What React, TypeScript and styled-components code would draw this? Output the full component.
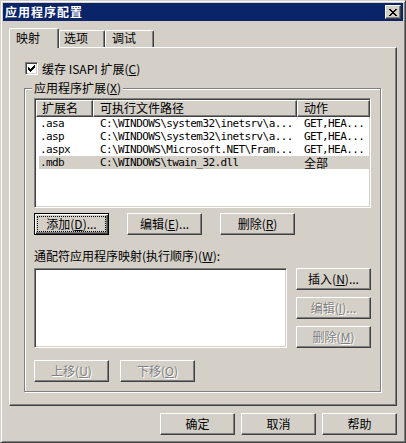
import React from "react";
import styled, { createGlobalStyle } from "styled-components";

const GlobalStyle = createGlobalStyle`
  html, body { margin: 0; padding: 0; background: #d4d0c8; }
  body {
    font-family: "Noto Sans CJK SC", "Noto Sans", sans-serif;
    font-size: 12px;
    color: #000;
  }
  * { box-sizing: border-box; }
`;

const Window = styled.div`
  width: 406px;
  height: 443px;
  background: #d4d0c8;
  border: 1px solid;
  border-color: #d4d0c8 #404040 #404040 #d4d0c8;
  box-shadow: inset 1px 1px #fff, inset -1px -1px #808080;
  padding: 2px;
  display: flex;
  flex-direction: column;
`;

const TitleBar = styled.div`
  height: 18px;
  background: #0a246a;
  display: flex;
  align-items: center;
  justify-content: space-between;
  padding: 0 2px 0 2px;
`;

const TitleText = styled.span`
  color: #fff;
  font-weight: bold;
  font-size: 12px;
  letter-spacing: 1px;
  line-height: 18px;
`;

const CloseButton = styled.div`
  width: 16px;
  height: 14px;
  background: #d4d0c8;
  border: 1px solid;
  border-color: #fff #404040 #404040 #fff;
  box-shadow: inset -1px -1px #808080;
  display: flex;
  align-items: center;
  justify-content: center;
  padding-right: 1px;
`;

const Body = styled.div`
  flex: 1;
  padding: 7px 6px 0 6px;
  display: flex;
  flex-direction: column;
`;

const TabStrip = styled.div`
  display: flex;
  align-items: flex-end;
  height: 19px;
  position: relative;
  z-index: 1;
`;

const Tab = styled.div<{ $active?: boolean; $w: number; $pl: number }>`
  width: ${(p) => p.$w}px;
  height: ${(p) => (p.$active ? 20 : 17)}px;
  margin-bottom: ${(p) => (p.$active ? -1 : 0)}px;
  padding-left: ${(p) => p.$pl}px;
  padding-top: ${(p) => (p.$active ? 2 : 0)}px;
  background: #d4d0c8;
  border: 1px solid;
  border-bottom: none;
  border-color: #fff #404040 #404040 #fff;
  border-radius: 2px 2px 0 0;
  box-shadow: inset -1px 0 #808080;
  line-height: 14px;
  white-space: nowrap;
`;

const Panel = styled.div`
  height: 359px;
  border: 1px solid;
  border-color: #fff #404040 #404040 #fff;
  box-shadow: inset -1px -1px #808080;
  padding: 14px 14px 0 14px;
  display: flex;
  flex-direction: column;
`;

const CheckRow = styled.div`
  display: flex;
  align-items: center;
  gap: 4px;
  height: 13px;
  margin-left: 1px;
  line-height: 13px;
  white-space: nowrap;
`;

const CheckBox = styled.div`
  width: 13px;
  height: 13px;
  background: #fff;
  border: 1px solid;
  border-color: #808080 #fff #fff #808080;
  box-shadow: inset 1px 1px #404040, inset -1px -1px #d4d0c8;
  display: flex;
  align-items: center;
  justify-content: center;
`;

const GroupBox = styled.div`
  position: relative;
  margin-top: 13px;
  margin-right: 1px;
  border: 1px solid #808080;
  box-shadow: 1px 1px 0 #fff, inset 1px 1px 0 #fff;
  padding: 9px 9px 9px 9px;
  display: flex;
  flex-direction: column;
`;

const GroupLabel = styled.span`
  position: absolute;
  top: -8px;
  left: 7px;
  padding: 0 2px;
  background: #d4d0c8;
  line-height: 14px;
  white-space: nowrap;
`;

const Sunken = styled.div<{ $w?: number; $h: number }>`
  ${(p) => (p.$w ? `width: ${p.$w}px;` : "")}
  height: ${(p) => p.$h}px;
  background: #fff;
  border: 1px solid;
  border-color: #808080 #fff #fff #808080;
  box-shadow: inset 1px 1px #404040, inset -1px -1px #d4d0c8;
  padding: 1px;
  overflow: hidden;
`;

const Columns = "57px 204px 73px";

const HeaderRow = styled.div`
  display: grid;
  grid-template-columns: ${Columns};
  height: 17px;
`;

const HeaderCell = styled.div<{ $pl: number }>`
  background: #d4d0c8;
  border: 1px solid;
  border-color: #fff #404040 #404040 #fff;
  box-shadow: inset -1px -1px #808080;
  padding-left: ${(p) => p.$pl}px;
  line-height: 14px;
  white-space: nowrap;
  overflow: hidden;
`;

const Row = styled.div<{ $selected?: boolean }>`
  display: grid;
  grid-template-columns: ${Columns};
  height: 13px;
  background: ${(p) =>
    p.$selected
      ? "linear-gradient(to right, #fff 0, #fff 3px, #d4d0c8 3px)"
      : "#fff"};
`;

const Cell = styled.div<{ $pl: number }>`
  height: 13px;
  padding-left: ${(p) => p.$pl}px;
  font-family: "DejaVu Sans Mono", "Liberation Mono", monospace;
  font-size: 11px;
  letter-spacing: -0.6px;
  line-height: 13px;
  white-space: nowrap;
`;

const CjkText = styled.span`
  font-family: "Noto Sans CJK SC", sans-serif;
  font-size: 12px;
  line-height: 13px;
  letter-spacing: 0;
`;

const ButtonRow = styled.div<{ $mt: number; $gap: number; $end?: boolean }>`
  display: flex;
  gap: ${(p) => p.$gap}px;
  margin-top: ${(p) => p.$mt}px;
  justify-content: ${(p) => (p.$end ? "flex-end" : "flex-start")};
`;

const Button = styled.div<{ $disabled?: boolean; $focused?: boolean }>`
  width: 75px;
  height: 22px;
  flex: none;
  background: #d4d0c8;
  display: flex;
  align-items: center;
  justify-content: center;
  white-space: nowrap;
  line-height: 14px;
  color: ${(p) => (p.$disabled ? "#808080" : "#000")};
  text-shadow: ${(p) => (p.$disabled ? "1px 1px 0 #fff" : "none")};
  border: 1px solid;
  border-color: ${(p) =>
    p.$focused ? "#000" : "#fff #404040 #404040 #fff"};
  box-shadow: ${(p) =>
    p.$focused
      ? "inset 1px 1px #fff, inset -1px -1px #404040, inset -2px -2px #808080"
      : "inset -1px -1px #808080"};
  outline: ${(p) => (p.$focused ? "1px dotted #000" : "none")};
  outline-offset: -4px;
`;

const Label = styled.div`
  margin-top: 14px;
  line-height: 14px;
  white-space: nowrap;
`;

const Lower = styled.div`
  display: flex;
  gap: 9px;
  margin-top: 5px;
`;

const ButtonColumn = styled.div`
  display: flex;
  flex-direction: column;
  gap: 7px;
`;

const Pixels: React.FC<{ rows: [number, number, number][]; w: number; h: number }> = ({ rows, w, h }) => (
  <svg width={w} height={h} viewBox={`0 0 ${w} ${h}`} shapeRendering="crispEdges">
    {rows.map(([x, y, l], i) => (
      <rect key={i} x={x} y={y} width={l} height={1} fill="#000" />
    ))}
  </svg>
);

const checkRows: [number, number, number][] = [
  [6, 0, 1],
  [5, 1, 2],
  [0, 2, 1],
  [4, 2, 3],
  [0, 3, 2],
  [3, 3, 3],
  [0, 4, 5],
  [1, 5, 3],
  [2, 6, 1],
];

const closeRows: [number, number, number][] = [
  [0, 0, 2],
  [6, 0, 2],
  [1, 1, 2],
  [5, 1, 2],
  [2, 2, 4],
  [3, 3, 2],
  [2, 4, 4],
  [1, 5, 2],
  [5, 5, 2],
  [0, 6, 2],
  [6, 6, 2],
];

const rows = [
  { ext: ".asa", path: "C:\\WINDOWS\\system32\\inetsrv\\a...", act: "GET,HEA..." },
  { ext: ".asp", path: "C:\\WINDOWS\\system32\\inetsrv\\a...", act: "GET,HEA..." },
  { ext: ".aspx", path: "C:\\WINDOWS\\Microsoft.NET\\Fram...", act: "GET,HEA..." },
  { ext: ".mdb", path: "C:\\WINDOWS\\twain_32.dll", act: "全部", selected: true },
];

export default function App() {
  return (
    <>
      <GlobalStyle />
      <Window>
        <TitleBar>
          <TitleText>应用程序配置</TitleText>
          <CloseButton>
            <Pixels rows={closeRows} w={8} h={7} />
          </CloseButton>
        </TitleBar>
        <Body>
          <TabStrip>
            <Tab $active $w={50} $pl={6}>映射</Tab>
            <Tab $w={46} $pl={4}>选项</Tab>
            <Tab $w={49} $pl={6}>调试</Tab>
          </TabStrip>
          <Panel>
            <CheckRow>
              <CheckBox>
                <Pixels rows={checkRows} w={7} h={7} />
              </CheckBox>
              <span>缓存 ISAPI 扩展(<u>C</u>)</span>
            </CheckRow>
            <GroupBox>
              <GroupLabel>应用程序扩展(<u>X</u>)</GroupLabel>
              <Sunken $h={110}>
                <HeaderRow>
                  <HeaderCell $pl={5}>扩展名</HeaderCell>
                  <HeaderCell $pl={6}>可执行文件路径</HeaderCell>
                  <HeaderCell $pl={6}>动作</HeaderCell>
                </HeaderRow>
                {rows.map((r) => (
                  <Row key={r.ext} $selected={r.selected}>
                    <Cell $pl={4}>{r.ext}</Cell>
                    <Cell $pl={7}>{r.path}</Cell>
                    <Cell $pl={7}>
                      {/[\u4e00-\u9fff]/.test(r.act) ? <CjkText>{r.act}</CjkText> : r.act}
                    </Cell>
                  </Row>
                ))}
              </Sunken>
              <ButtonRow $mt={5} $gap={18}>
                <Button $focused>添加(<u>D</u>)...</Button>
                <Button>编辑(<u>E</u>)...</Button>
                <Button>删除(<u>R</u>)</Button>
              </ButtonRow>
              <Label>通配符应用程序映射(执行顺序)(<u>W</u>):</Label>
              <Lower>
                <Sunken $w={254} $h={80} />
                <ButtonColumn>
                  <Button>插入(<u>N</u>)...</Button>
                  <Button $disabled>编辑(<u>I</u>)...</Button>
                  <Button $disabled>删除(<u>M</u>)</Button>
                </ButtonColumn>
              </Lower>
              <ButtonRow $mt={12} $gap={11}>
                <Button $disabled>上移(<u>U</u>)</Button>
                <Button $disabled>下移(<u>O</u>)</Button>
              </ButtonRow>
            </GroupBox>
          </Panel>
          <ButtonRow $mt={7} $gap={6} $end>
            <Button>确定</Button>
            <Button>取消</Button>
            <Button>帮助</Button>
          </ButtonRow>
        </Body>
      </Window>
    </>
  );
}
